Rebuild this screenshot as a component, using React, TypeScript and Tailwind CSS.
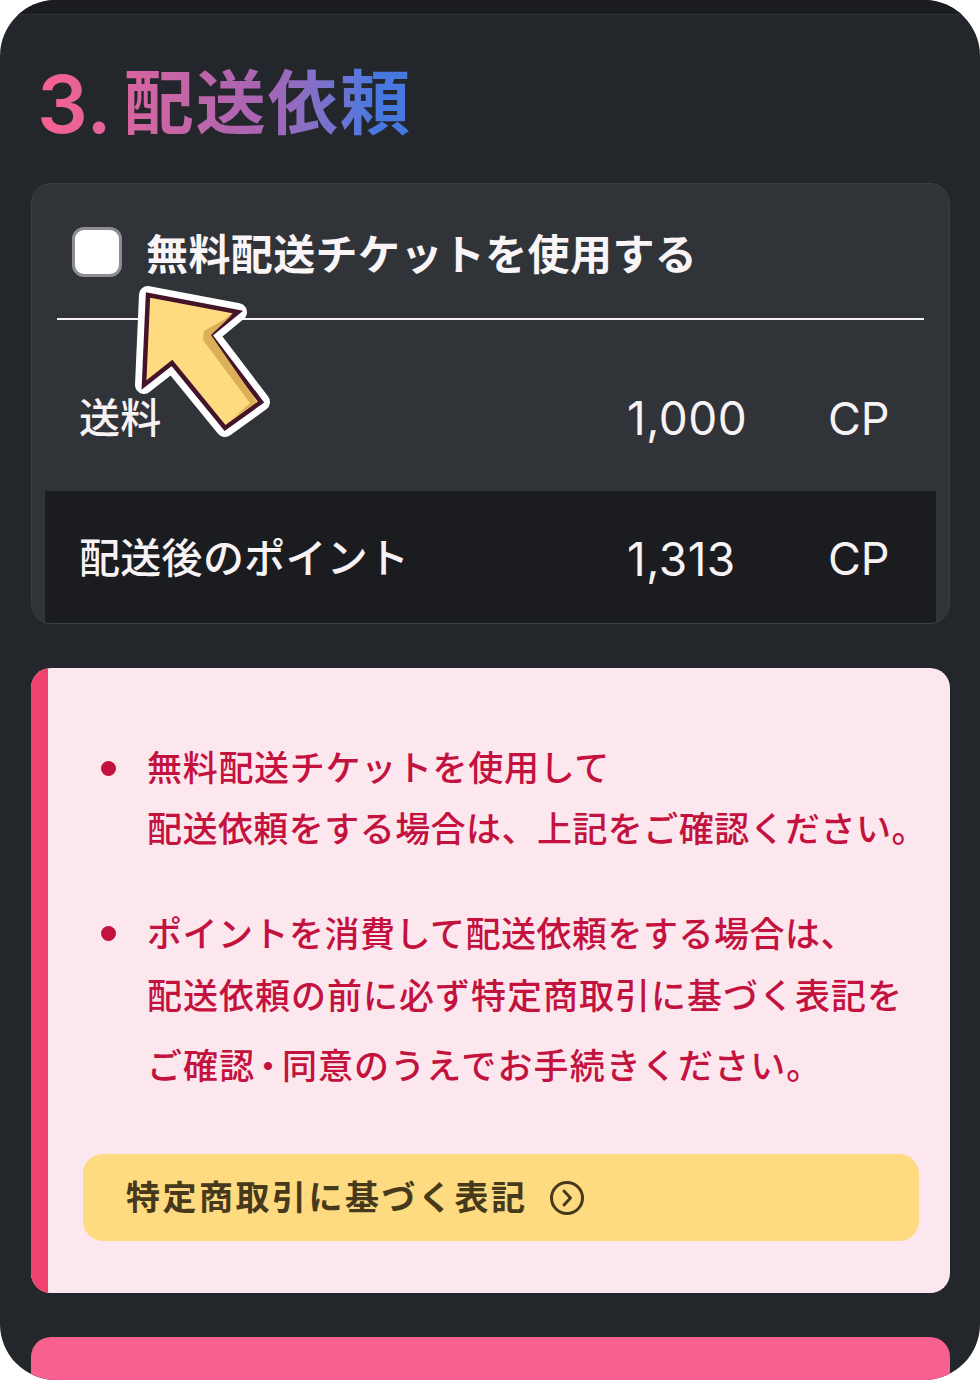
import React from 'react';

const font = { fontFamily: 'Inter, "Noto Sans CJK JP", sans-serif' };

const ArrowPointer = () => (
  <svg className="absolute left-[128px] top-[280px]" width="150" height="165" viewBox="128 280 150 165">
    <path
      d="M148 295 L238 312 L210 335 L261 402 L225 428 L172 363 L144 385 Z"
      fill="#fff"
      stroke="#fff"
      strokeWidth="18"
      strokeLinejoin="round"
    />
    <path
      d="M148 295 L238 312 L210 335 L261 402 L225 428 L172 363 L144 385 Z"
      fill="#fedb80"
      stroke="#43142a"
      strokeWidth="4.5"
      strokeLinejoin="miter"
    />
    <path d="M232 315 L204 331 L203 340 L250 403 L232 419 L257 402 L211 335 Z" fill="#dcb058" />
  </svg>
);

const Row = ({ label, amount, dark }: { label: string; amount: string; dark?: boolean }) => (
  <div
    className={`mx-[13px] grid grid-cols-[548px_201px_1fr] items-center pl-[34px] text-[#f7f2f4] ${
      dark ? 'h-[133px] bg-[#1a1c20] pt-[2px]' : 'h-[171px] pt-[25px]'
    }`}
  >
    <span className="text-[41px] leading-none font-medium tracking-[0.3px]">{label}</span>
    <span className="text-[46px] leading-none font-normal tracking-[0.5px]">{amount}</span>
    <span className="text-[45px] leading-none font-normal">CP</span>
  </div>
);

export default function App() {
  return (
    <div className="relative h-[1380px] w-[980px] overflow-hidden bg-white" style={font}>
      <div className="h-full overflow-hidden rounded-[56px] bg-[#23262b]">
        <div className="h-[15px] border-b border-[#2e3136] bg-[#1a1c20]" />

        <h1 className="mt-[46px] ml-[37px] flex h-[85px] w-fit items-center bg-gradient-to-r from-[#f8608f] via-[#a864b4] via-60% to-[#4678e0] to-90% bg-clip-text font-bold text-transparent">
          <span className="mr-[12px] text-[80px] leading-none font-semibold">3.</span>
          <span className="text-[70px] leading-none tracking-[2px]">配送依頼</span>
        </h1>

        <section className="mr-[30px] ml-[31px] mt-[37px] h-[441px] overflow-hidden rounded-[20px] border border-[#3a3d42] bg-[#303338]">
          <div className="flex h-[134px] items-center pl-[40px]">
            <span className="mt-[2px] h-[50px] w-[50px] rounded-[12px] border-[3px] border-[#8e8e92] bg-white" />
            <span className="mt-[8px] ml-[24px] text-[42px] leading-none font-semibold tracking-[0.4px] text-[#f9f4f6]">
              無料配送チケットを使用する
            </span>
          </div>
          <div className="mx-[25px] h-[2px] bg-[#f5f0f2]" />
          <Row label="送料" amount="1,000" />
          <Row label="配送後のポイント" amount="1,313" dark />
        </section>

        <section className="mr-[30px] ml-[31px] mt-[44px] flex h-[625px] overflow-hidden rounded-[20px] bg-[#fce7ee]">
          <div className="w-[17px] shrink-0 bg-[#ef4271]" />
          <div className="flex min-w-0 flex-1 flex-col pr-[31px] pl-[35px]">
            <ul className="pt-[69px] text-[35px] font-medium text-[#c4123f]">
              <li className="relative pl-[64px]">
                <span className="absolute top-[24px] left-[18px] h-[15px] w-[15px] rounded-full bg-[#c4123f]" />
                <p className="h-[61px] leading-[62px] tracking-[0.7px]">無料配送チケットを使用して</p>
                <p className="h-[61px] leading-[62px] tracking-[0.45px] whitespace-nowrap">配送依頼をする場合は、上記をご確認ください。</p>
              </li>
              <li className="relative mt-[44px] pl-[64px]">
                <span className="absolute top-[23px] left-[18px] h-[15px] w-[15px] rounded-full bg-[#c4123f]" />
                <p className="h-[62px] leading-[62px] tracking-[0.5px]">ポイントを消費して配送依頼をする場合は、</p>
                <p className="h-[70px] leading-[62px] tracking-[1px] whitespace-nowrap">配送依頼の前に必ず特定商取引に基づく表記を</p>
                <p className="h-[62px] leading-[62px] tracking-[1.1px] whitespace-nowrap">
                  ご確認<span className="px-[4px] [font-feature-settings:'palt']">・</span>同意のうえでお手続きください。
                </p>
              </li>
            </ul>
            <button className="mt-auto mb-[52px] flex h-[87px] items-center gap-[22px] rounded-[20px] bg-[#fedb80] pl-[43px] text-[34px] font-semibold tracking-[2.5px] text-[#47391b]">
              特定商取引に基づく表記
              <svg width="34" height="34" viewBox="0 0 34 34" fill="none" stroke="#47391b" strokeWidth="3">
                <circle cx="17" cy="17" r="15.5" />
                <path d="M14 10 L20.5 17 L14 24" strokeLinecap="round" strokeLinejoin="round" />
              </svg>
            </button>
          </div>
        </section>

        <div className="mr-[30px] ml-[31px] mt-[44px] h-[80px] rounded-[20px] bg-[#f8608f]" />
      </div>
      <ArrowPointer />
    </div>
  );
}
